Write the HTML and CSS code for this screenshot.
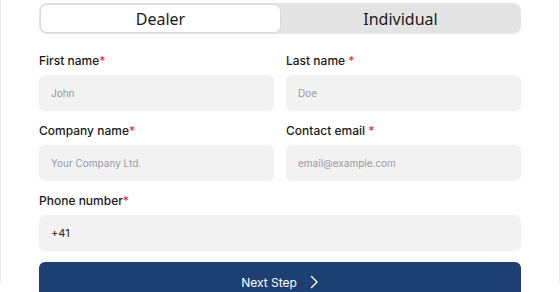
FILE: index.html
```html
<!DOCTYPE html>
<html>
<head>
<meta charset="utf-8">
<link rel="stylesheet" href="styles.css">
</head>
<body>
<div class="card">
  <div class="form">
    <div class="toggle">
      <div class="tab active">Dealer</div>
      <div class="tab">Individual</div>
    </div>
    <div class="grid">
      <div class="field">
        <div class="label">First name<span class="req">*</span></div>
        <div class="input placeholder">John</div>
      </div>
      <div class="field">
        <div class="label">Last name <span class="req">*</span></div>
        <div class="input placeholder">Doe</div>
      </div>
      <div class="field">
        <div class="label">Company name<span class="req">*</span></div>
        <div class="input placeholder">Your Company Ltd.</div>
      </div>
      <div class="field">
        <div class="label">Contact email <span class="req">*</span></div>
        <div class="input placeholder">email@example.com</div>
      </div>
      <div class="field full">
        <div class="label">Phone number<span class="req">*</span></div>
        <div class="input value">+41</div>
      </div>
    </div>
    <div class="button">
      <span>Next Step</span>
      <svg width="10" height="14" viewBox="0 0 10 14"><path d="M2.5 1.5 L8 7 L2.5 12.5" fill="none" stroke="#fff" stroke-width="1.4" stroke-linecap="round" stroke-linejoin="round"/></svg>
    </div>
  </div>
</div>
</body>
</html>
```
FILE: styles.css
```css
html, body {
  margin: 0;
  padding: 0;
  background: #fff;
  overflow: hidden;
}
body {
  font-family: Inter, "Liberation Sans", sans-serif;
  width: 560px;
  height: 292px;
}
.card {
  width: 558px;
  height: 284px;
  border-left: 1px solid #ececec;
  border-right: 1px solid #ececec;
  border-bottom-left-radius: 4px;
  border-bottom-right-radius: 4px;
}
.form {
  padding: 3px 38px 0 38px;
  display: flex;
  flex-direction: column;
}
.toggle {
  display: flex;
  height: 31px;
  background: #e4e4e4;
  border-radius: 8px;
  padding: 1px;
  box-sizing: border-box;
}
.tab {
  flex: 1;
  display: flex;
  align-items: center;
  justify-content: center;
  font-family: "Noto Sans", sans-serif;
  font-size: 16px;
  color: #1a1a1a;
  border-radius: 7px;
}
.tab.active {
  background: #fff;
  border: 1px solid #d9d9d9;
}
.grid {
  margin-top: 19px;
  display: grid;
  grid-template-columns: 1fr 1fr;
  column-gap: 12px;
  row-gap: 12px;
}
.full {
  grid-column: 1 / 3;
}
.label {
  font-size: 12px;
  line-height: 16px;
  font-weight: 500;
  color: #1a1a1a;
  margin-bottom: 6px;
}
.req {
  color: #e53935;
}
.input {
  height: 36px;
  background: #f2f2f2;
  border-radius: 6px;
  display: flex;
  align-items: center;
  padding-left: 12px;
  font-size: 10px;
}
.placeholder {
  color: #9a9a9a;
}
.value {
  color: #222;
  font-size: 11px;
}
.button {
  margin-top: 11px;
  height: 36px;
  background: #1d3f72;
  border-radius: 6px 6px 0 0;
  display: flex;
  align-items: center;
  justify-content: center;
  gap: 12px;
  color: #fff;
  font-size: 12px;
  padding-top: 2px;
}
```
